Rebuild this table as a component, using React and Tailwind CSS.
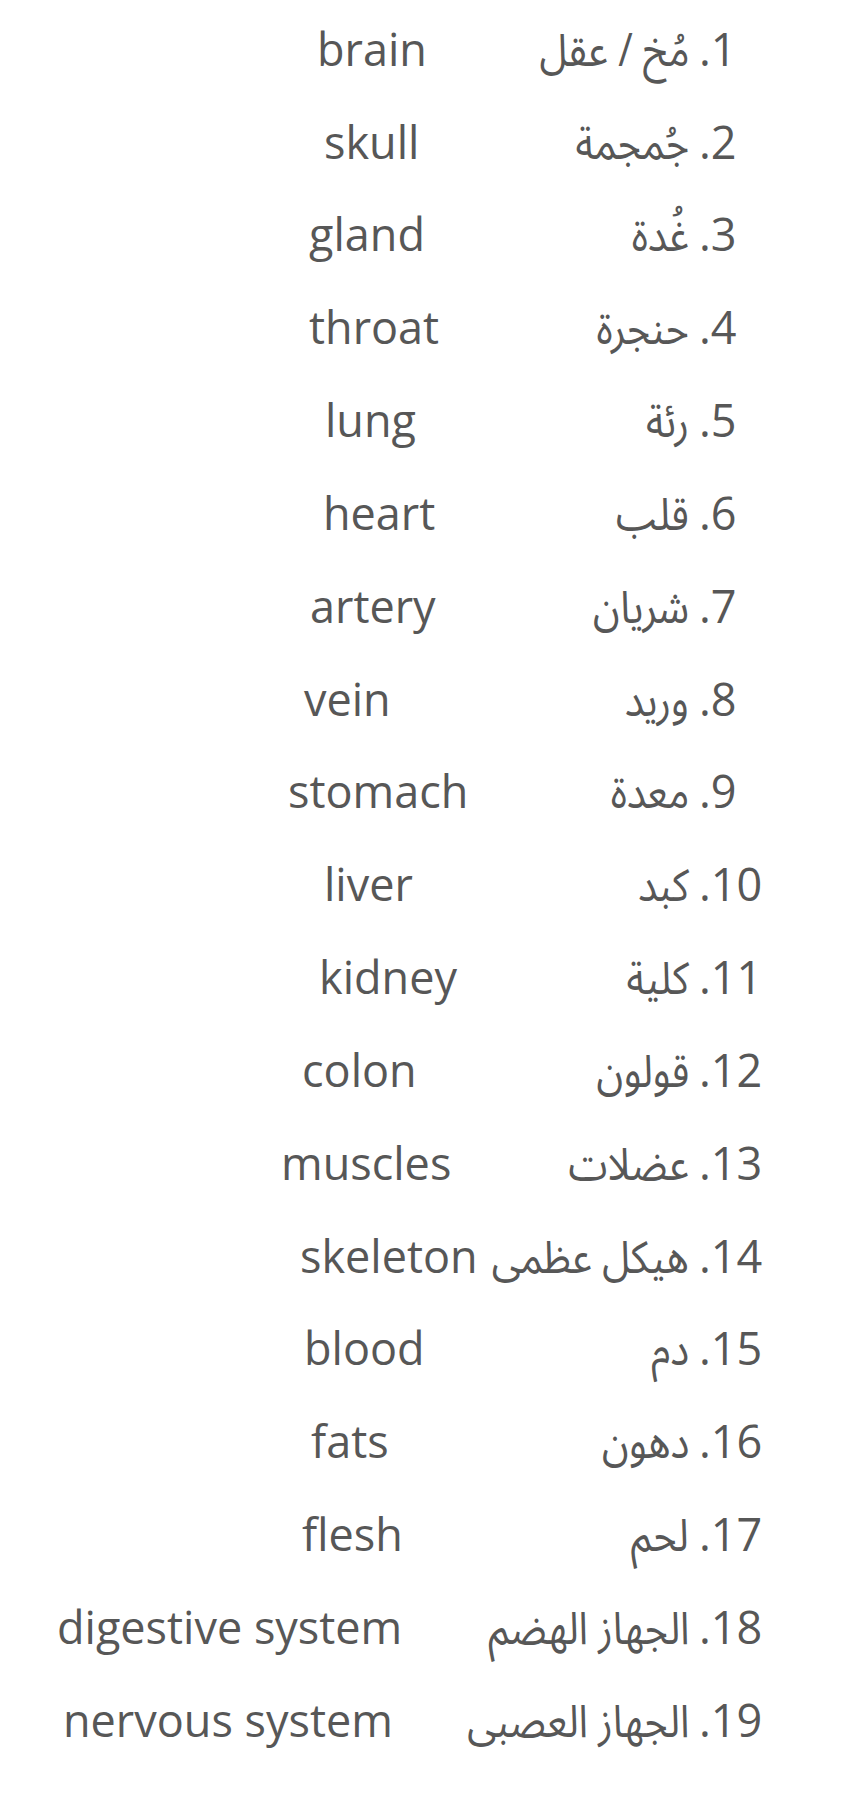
import React from 'react';

// English word, its left offset on the line, Arabic word
const WORDS = [
  ['brain', 317, 'مُخ / عقل'],
  ['skull', 324, 'جُمجمة'],
  ['gland', 309, 'غُدة'],
  ['throat', 309, 'حنجرة'],
  ['lung', 325, 'رئة'],
  ['heart', 323, 'قلب'],
  ['artery', 310, 'شريان'],
  ['vein', 304, 'وريد'],
  ['stomach', 288, 'معدة'],
  ['liver', 324, 'كبد'],
  ['kidney', 319, 'كلية'],
  ['colon', 302, 'قولون'],
  ['muscles', 281, 'عضلات'],
  ['skeleton', 300, 'هيكل عظمى'],
  ['blood', 304, 'دم'],
  ['fats', 311, 'دهون'],
  ['flesh', 302, 'لحم'],
  ['digestive system', 57, 'الجهاز الهضم'],
  ['nervous system', 63, 'الجهاز العصبى'],
];

function Row({ n, en, left, ar }) {
  return (
    <div className="grid h-[92.85px] grid-cols-[minmax(0,1fr)_167px] items-center">
      <div className="flex min-w-0 items-center">
        <span className="min-w-0 shrink whitespace-nowrap" style={{ paddingLeft: left }}>
          {en}
        </span>
        {/* the Arabic face in the shot runs narrower than Noto Sans Arabic */}
        <span dir="rtl" className="ml-auto shrink-0 origin-right scale-x-[0.88] whitespace-nowrap">
          {ar}
        </span>
      </div>
      <span dir="rtl" className="pl-[10px] text-left">
        {n}.
      </span>
    </div>
  );
}

export default function App() {
  return (
    <div className="min-h-[1815px] w-[856px] bg-white pt-[2px] font-['Open_Sans','Noto_Sans_Arabic','Noto_Naskh_Arabic','DejaVu_Sans',sans-serif] text-[45px] text-[#575757]">
      {WORDS.map(([en, left, ar], i) => (
        <Row key={en} n={i + 1} en={en} left={left} ar={ar} />
      ))}
    </div>
  );
}
